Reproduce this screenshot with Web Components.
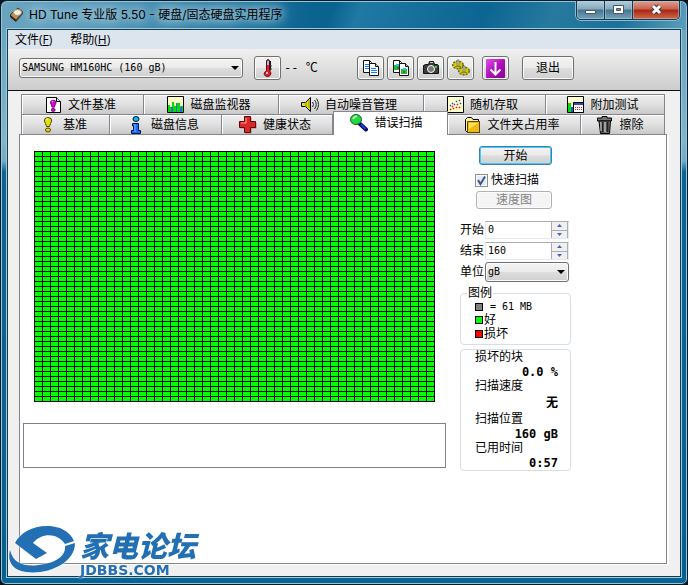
<!DOCTYPE html>
<html lang="zh-CN">
<head>
<meta charset="utf-8">
<title>HD Tune 专业版 5.50</title>
<style>
html,body{height:100%}
body{margin:0;background:#04141f;color:#000;
  --ui:"DejaVu Sans Mono","Noto Sans CJK SC",monospace;
  font:12px/16px "Open Sans","Noto Sans CJK SC",sans-serif}
</style>
</head>
<body>
<app-window>
  <title-bar slot="title">HD Tune 专业版 5.50 - 硬盘/固态硬盘实用程序</title-bar>
  <menu-bar slot="menu"></menu-bar>
  <tool-bar slot="tools"></tool-bar>
  <tab-row slot="tabs" columns="122fr 135fr 145fr 122fr 119fr">
    <tab-item icon="filebench">文件基准</tab-item>
    <tab-item icon="monitor">磁盘监视器</tab-item>
    <tab-item icon="speaker">自动噪音管理</tab-item>
    <tab-item icon="random">随机存取</tab-item>
    <tab-item icon="extra">附加测试</tab-item>
  </tab-row>
  <tab-row slot="tabs" columns="88fr 112fr 111fr 115fr 133fr 84fr">
    <tab-item icon="bench">基准</tab-item>
    <tab-item icon="info">磁盘信息</tab-item>
    <tab-item icon="health">健康状态</tab-item>
    <tab-item icon="scan" selected>错误扫描</tab-item>
    <tab-item icon="folder">文件夹占用率</tab-item>
    <tab-item icon="trash">擦除</tab-item>
  </tab-row>
  <scan-page></scan-page>
  <forum-logo slot="logo"></forum-logo>
</app-window>

<script>
const svg=(w,h,body)=>`<svg width="${w}" height="${h}" viewBox="0 0 ${w} ${h}" aria-hidden="true">${body}</svg>`;
const page='<path d="M1.500 1.500h10l4 4V16.500h-14z" fill="#fff" stroke="#000"/><path d="M11.500 1.500v4h4" fill="#ddd" stroke="#000"/>';
const bang=(c,d)=>`<path d="M5 2.500Q8 .5 11 2.500Q12.500 5 10.500 7.500L9.500 10.500H6.500L5.500 7.500Q3.500 5 5 2.500z" fill="${c}" stroke="${d}"/><path d="M6 3q1-1.500 2-.5l-1 2z" fill="#fff" opacity=".8"/><ellipse cx="8" cy="14" rx="2.500" ry="2" fill="${c}" stroke="${d}"/>`;
const docs=(inner)=>`<path d="M1.500 1.500h6l2 2v10h-8z" fill="#fff" stroke="#111"/><path d="M7.500 1.500v3h2" fill="none" stroke="#111"/><path d="M7.500 4.500h6l3 3v9h-9z" fill="#fff" stroke="#111"/><path d="M13.500 4.500v3h3" fill="#ccc" stroke="#111"/>${inner}`;
const gear=(x,y)=>`<g transform="translate(${x} ${y})"><ellipse rx="5" ry="3.500" fill="#d9d000" stroke="#6a6500" stroke-width="2" stroke-dasharray="2 1"/><ellipse rx="4.500" ry="3" fill="#d4cc08"/><path d="M-1-5h2v6h-2z" fill="#c9c9c9" stroke="#555" stroke-width=".6"/><path d="M-3 1.500h6" stroke="#8f8800"/></g>`;
const icons={
 filebench:svg(17,18,page+`<g transform="translate(2 3) scale(.78)">${bang('#e000e0','#500050')}</g>`),
 bench:svg(17,18,bang('#e8dc10','#4c4800')),
 monitor:svg(17,17,'<path d="M.5.5h16v16H.5z" fill="#ffffc8" stroke="#000"/><path d="M1 9h2v2h2V6h2v4h3V7h3v3h3v6H1z" fill="#00e000"/><path d="M4 11h2v5H4zM9 7h1v9H9zM13 11h2v5h-2z" fill="#4060e0"/>'),
 speaker:svg(18,17,'<path d="M.5 6.500h4L9.500 1.500v14l-5-5h-4z" fill="#e8e000" stroke="#000"/><path d="M5 6v5M8 4v8" stroke="#8c8600"/><path d="M11.500 6q2 2.500 0 5M13.500 4q3.500 4.500 0 9M15.500 2.500q4 6 0 12" fill="none" stroke="#222"/>'),
 random:svg(17,17,'<path d="M.5.5h16v16H.5z" fill="#ffffc8" stroke="#000"/><path d="M3 9h1v1H3zM5 7h1v1H5zM7 8h1v1H7zM9 5h1v1H9zM12 4h1v1h-1zM13 7h1v1h-1z" fill="#1840ff" stroke="#1840ff" stroke-width=".5"/><path d="M3 13h1v1H3zM6 12h1v1H6zM5 10h1v1H5zM9 11h1v1H9zM12 11h1v1h-1zM10 8h1v1h-1z" fill="#f00" stroke="#f00" stroke-width=".5"/>'),
 extra:svg(17,17,'<path d="M.5.5h16v16H.5z" fill="#ffffd0" stroke="#000"/><path d="M1 7h3v9H1z" fill="#00e000"/><path d="M4 11h3v5H4z" fill="#3050d0"/><path d="M6.500 6.500h10v10h-10z" fill="#fff" stroke="#000"/><path d="M7 7h9v2H7z" fill="#2848c8"/><path d="M8 11.500h8M8 13.500h8" stroke="#e02020" stroke-dasharray="1 1"/>'),
 info:svg(17,18,'<ellipse cx="8" cy="3" rx="3" ry="2.500" fill="#18b8e8" stroke="#001830"/><path d="M4.500 7.500h6v7h2v3H3.500v-3h2V10h-1z" fill="#1070ff" stroke="#001040"/><path d="M7 8v8" stroke="#70c0ff"/>'),
 health:svg(18,18,'<path d="M6.500 1.500h6v5h5v6h-5v5h-6v-5h-5v-6h5z" fill="#8b8b8b"/><path d="M5.500.5h6v5h5v6h-5v5h-6v-5h-5v-6h5z" fill="#d82828" stroke="#600"/><path d="M7 2v5H2" fill="none" stroke="#ff9a90"/>'),
 scan:svg(18,18,'<path d="M9 9l7 6.500" stroke="#000060" stroke-width="4" stroke-linecap="round"/><path d="M11 10.500l4.500 4.500" stroke="#2040e0" stroke-width="2"/><ellipse cx="6" cy="5.500" rx="5.500" ry="5" fill="#20d840" stroke="#106020"/><path d="M3 5q1-2.500 4-3" stroke="#baffba" stroke-width="2" fill="none"/>'),
 folder:svg(17,17,'<path d="M1.500 14.500v-11l2-2h4l1.500 2h5.500v2h1v11h-12z" fill="#fff090" stroke="#000"/><path d="M3.500 5.500h12v11h-12z" fill="#edbb14" stroke="#5a4200"/><path d="M5 7h9L5 13z" fill="#ffe060"/>'),
 trash:svg(16,18,'<path d="M5 2V.5h5V2h4.500v3H.5V2z" fill="#777" stroke="#000"/><path d="M2 5h11.500l-1 12.500h-9z" fill="#777" stroke="#000"/><path d="M5.500 6v10.500M10.500 6v10" stroke="#222" stroke-width="2"/><path d="M4 6v9M8 6v10" stroke="#ccc"/>'),
 disk:svg(15,15,'<path d="M1 8L9 1l5 4-7 8z" fill="#c98b4c" stroke="#54351b"/><ellipse cx="8.500" cy="5.500" rx="4" ry="3" fill="#fff3dc" stroke="#997" /><path d="M1 8l6 5v2L1 10z" fill="#222"/><path d="M7 13l7-8v2l-7 8z" fill="#444"/>'),
 thermo:svg(18,20,'<path d="M7.500 2.500q1.500-2 3 0v10q3 3 0 5.500q-2 1-4 0q-3-2.500 1-5.500z" fill="#e02030" stroke="#700010"/><path d="M8 3h2v4H8z" fill="#60e0e8"/><path d="M11.500 3v9.500" stroke="#111"/><path d="M11 8h2M11 11h2" stroke="#444"/><path d="M7 15h2" stroke="#ffb0b0" stroke-width="2"/>'),
 copy:svg(18,18,docs('<path d="M3 5.500h4M3 7.500h4M3 9.500h4M9 9.500h5M9 11.500h6M9 13.500h6" stroke="#1080ff"/>')),
 copyimg:svg(18,18,docs('<path d="M2 6h5v5H2zM9 10h6v5H9z" fill="#10c840"/><path d="M4 5h3v2H4zM11 9h3v2h-3z" fill="#10c8f0"/><path d="M5 8h2v2H5zM11 12h2v2h-2z" fill="#f02020"/>')),
 camera:svg(18,18,'<path d="M1.500 6.500l2-1h3l1-3h4l1 3h3l1 1v8h-15z" fill="#3b3b3b" stroke="#111"/><path d="M8 3.500h3" stroke="#ccc"/><circle cx="9" cy="10" r="3.500" fill="#777" stroke="#fff"/><path d="M13 7h2v2h-2z" fill="#10e040"/>'),
 gears:svg(18,18,gear(6,6)+gear(12,12)),
 down:svg(19,19,'<defs><linearGradient id="p" x2="1" y2="1"><stop stop-color="#e052e8"/><stop offset=".5" stop-color="#b010b8"/><stop offset="1" stop-color="#8b0099"/></linearGradient></defs><rect width="19" height="19" rx="1" fill="url(#p)"/><path d="M9.500 3v12M4.500 10.500l5 5 5-5" fill="none" stroke="#fff" stroke-width="2"/>')
};
const base=`:host{box-sizing:border-box}*{box-sizing:border-box}button,input,select,textarea{font:inherit;color:inherit;margin:0}svg{display:block;flex:none}
.push{border:1px solid #707070;border-radius:3px;background:linear-gradient(#f3f3f3,#ebebeb 48%,#ddd 52%,#cfcfcf);box-shadow:inset 0 0 0 1px #fbfbfb;padding:0}
.drop{appearance:none;border:1px solid #707070;border-radius:3px;height:20px;padding:0 18px 0 2px;min-width:0;
 background:linear-gradient(#f3f3f3,#ebebeb 48%,#ddd 52%,#cfcfcf);box-shadow:inset 0 0 0 1px #fbfbfb}
.combo{display:grid;grid-template-columns:minmax(0,1fr)}.combo>*{grid-area:1/1}.combo svg{place-self:center end;margin-right:4px;pointer-events:none}`;
const arrow=svg(8,4,'<path d="M0 0h8L4 4z"/>');
const define=(name,html,setup)=>customElements.define(name,class extends HTMLElement{
  constructor(){super();this.attachShadow({mode:'open'}).innerHTML=`<style>${base}</style>`+html(this);}
  connectedCallback(){if(setup)setup(this)}
});

define('title-bar',()=>`<style>
:host{display:flex;height:29px;padding:0 7px 0 8px;align-items:flex-start;font-family:Inter,"Noto Sans CJK SC",sans-serif}
.name{display:flex;align-items:center;gap:5px;height:27px;flex:1;min-width:0;white-space:nowrap;text-shadow:0 0 8px #c6e0ee,0 0 12px #a9cfe2,0 0 16px #a9cfe2}
.box{display:flex;border:1px solid #17384d;border-top:0;border-radius:0 0 5px 5px;overflow:hidden;box-shadow:0 0 0 1px #8fb9ce}
.box button{display:grid;place-items:center;border:0;border-right:1px solid #17384d;width:28px;height:18px;padding:0;background:linear-gradient(#b3cddc,#83a7bc 45%,#45748f 50%,#75a3ba);box-shadow:inset 0 0 0 1px #b5d0df80}
.box .close{width:46px;border:0;background:linear-gradient(#dca093,#c9604d 45%,#a82411 50%,#d06b4a)}
</style><div class="name">${icons.disk}<span><slot></slot></span></div>
<div class="box"><button aria-label="最小化">${svg(13,12,'<path d="M1.500 6.500h10v3h-10z" fill="#fff" stroke="#485965"/>')}</button>
<button aria-label="最大化">${svg(13,12,'<path d="M1.500 1.500h10v8h-10z" fill="#fff" stroke="#485965"/><path d="M4.500 4.500h4v2h-4z" fill="#6d96aa" stroke="#485965"/>')}</button>
<button class="close" aria-label="关闭">${svg(13,12,'<path d="M3 2l7 7M10 2l-7 7" stroke="#533" stroke-width="5"/><path d="M3 2l7 7M10 2l-7 7" stroke="#fff" stroke-width="3"/>')}</button></div>`);

define('menu-bar',()=>`<style>
:host{display:flex;gap:18px;height:19px;padding-left:7px;background:#dce4ed}
button{border:0;background:none;padding:0;line-height:19px}
</style><button>文件(<u>F</u>)</button><button>帮助(<u>H</u>)</button>`);

define('icon-button',el=>`<style>
:host{display:block}
button{display:grid;place-items:center;width:27px;height:24px;box-shadow:inset 0 0 0 1px #fbfbfb,0 0 0 1px #f0f0f0}
</style><button class="push" aria-label="${el.getAttribute('label')}">${icons[el.getAttribute('icon')]}</button>`);

define('tool-bar',()=>`<style>
:host{display:flex;align-items:center;height:42px;padding:0 11px 3px;background:linear-gradient(#f0f0f0,#ccc);border-bottom:1px solid #111;font-family:var(--ui)}
.combo{width:224px;margin-right:11px;font-size:10px}.temp{width:76px;padding-left:3px;font-size:12px;white-space:pre}
.group{display:flex;gap:3px;margin-right:8px}.exit{width:52px;height:24px;margin-left:13px}
</style><div class="combo"><select class="drop" aria-label="硬盘"><option>SAMSUNG HM160HC (160 gB)</option></select>${arrow}</div>
<icon-button icon="thermo" label="温度"></icon-button><span class="temp">-- ℃</span>
<div class="group"><icon-button icon="copy" label="复制文本"></icon-button><icon-button icon="copyimg" label="复制图像"></icon-button><icon-button icon="camera" label="截图"></icon-button><icon-button icon="gears" label="选项"></icon-button></div>
<icon-button icon="down" label="保存"></icon-button><button class="push exit">退出</button>`);

define('tab-item',el=>`<style>
:host{display:block;height:20px;min-width:0}
button{display:flex;align-items:center;justify-content:center;gap:6px;width:100%;height:100%;padding:0 4px 0 0;white-space:nowrap;border:0;border-top:1px solid #85858e;border-right:1px solid #85858e;background:linear-gradient(#ededed,#e2e2e2 45%,#c9c9c9);box-shadow:inset 1px 1px #fff}
:host([selected]){height:24px;margin:-3px 0 -1px;z-index:1}
:host([selected]) button{background:#fff;border-left:1px solid #85858e;padding:0 8px 2px 0}
</style><button role="tab" aria-selected="${el.hasAttribute('selected')}">${icons[el.getAttribute('icon')]}<span><slot></slot></span></button>`);

define('tab-row',()=>`<style>
:host{display:grid;height:20px;margin:0 2px;border-left:1px solid #85858e;font-family:var(--ui)}
</style><slot></slot>`,el=>el.style.gridTemplateColumns=el.getAttribute('columns'));

define('block-map',()=>`<style>
:host{display:block;width:401px;height:251px;background-color:#0f0;
background-image:repeating-linear-gradient(90deg,#000 0 1px,transparent 1px 8px),repeating-linear-gradient(#000 0 1px,transparent 1px 5px)}
</style>`);

define('number-field',el=>`<style>
:host{display:grid;grid-template-columns:25px minmax(0,1fr);align-items:center;height:19px}
.field{display:flex;height:18px;border:1px solid #e3e9ef;border-top-color:#abadb3;background:#fff}
input{flex:1;min-width:0;border:0;padding:0 2px;background:none;font-size:10px;outline:0}
.spin{display:grid;width:17px;border:1px solid #abadb3;border-top:0}
.spin button{display:grid;place-items:center;border:0;padding:0;background:#f0f0f0;height:8px;overflow:hidden}
.spin button+button{border-top:1px solid #abadb3}
</style><label for="n">${el.getAttribute('label')}</label><div class="field"><input id="n" type="text" inputmode="numeric" value="${el.getAttribute('value')}">
<span class="spin"><button aria-label="增加">${svg(5,3,'<path d="M0 3h5L2.500 0z" fill="#4a62b8"/>')}</button><button aria-label="减少">${svg(5,3,'<path d="M0 0h5L2.500 3z" fill="#4a62b8"/>')}</button></span></div>`);

define('legend-box',()=>`<style>
:host{display:block}
fieldset{margin:0;border:1px solid #d5dfe5;border-radius:4px;padding:0 0 3px 14px;min-width:0;line-height:14px}
legend{padding:0 1px;margin-left:-8px;line-height:16px}
p{margin:0;display:flex;align-items:center;gap:1px}i{width:8px;height:8px;border:1px solid #000;background:var(--c)}
.size{font-size:10px;gap:7px;line-height:12px}
</style><fieldset><legend>图例</legend><p class="size"><i style="--c:#808080"></i>= 61 MB</p><p><i style="--c:#0f0"></i>好</p><p><i style="--c:#f00"></i>损坏</p></fieldset>`);

define('stat-box',()=>`<style>
:host{display:block;border:1px solid #d5dfe5;border-radius:4px;padding:0 12px 0 14px}
dl{margin:0}dt{line-height:15px}dd{margin:0;text-align:right;font-weight:bold;line-height:14px;white-space:pre}
dd.tall{line-height:18px}
</style><dl><dt>损坏的块</dt><dd>0.0 %</dd><dt>扫描速度</dt><dd class="tall">无</dd><dt>扫描位置</dt><dd>160 gB</dd><dt>已用时间</dt><dd>0:57</dd></dl>`);

define('scan-page',()=>`<style>
:host{display:grid;grid-template-columns:minmax(423px,1fr) 111px;column-gap:14px;align-items:start;flex:1;padding:11px 95px 0 3px;border:1px solid #85858e;background:#fff;box-shadow:2px 1px #fff;font-family:var(--ui)}
.left{display:grid;gap:21px;padding-top:5px}block-map{margin-left:11px}
textarea{width:100%;height:45px;border:1px solid #808088;resize:none;outline:0;display:block}
.right{display:flex;flex-direction:column}
.start{height:19px;margin:0 19px;border-color:#3c7fb1;box-shadow:inset 0 0 0 1px #48c8f4}
.quick{display:flex;align-items:center;gap:3px;height:16px;margin:7px 0 3px 15px}
.quick input{appearance:none;width:13px;height:13px;border:1px solid #8e8f8f;background:#e6ebf2;box-shadow:inset 0 0 0 1px #fff}
.check{display:grid}.check>*{grid-area:1/1}.check svg{pointer-events:none}
.speed{height:18px;margin:0 19px 11px 16px;border-color:#adb2b5;background:#f4f4f4;color:#838383;line-height:16px}
.form{display:grid;grid-template-columns:minmax(0,1fr);gap:2px;padding-right:2px}
.unit{display:grid;grid-template-columns:25px minmax(0,1fr);align-items:center}.unit select{font-size:10px;width:100%}
legend-box{margin:3px 0 4px}
</style><div class="left"><block-map role="img" aria-label="扫描块"></block-map><textarea readonly aria-label="日志"></textarea></div>
<div class="right"><button class="push start">开始</button>
<div class="quick"><span class="check"><input type="checkbox" id="q" checked>${svg(13,13,'<path d="M3 6l2.500 4L10 2.500" fill="none" stroke="#41578f" stroke-width="2"/>')}</span><label for="q">快速扫描</label></div>
<button class="push speed" disabled>速度图</button>
<div class="form"><number-field label="开始" value="0"></number-field><number-field label="结束" value="160"></number-field>
<div class="unit"><label for="u">单位</label><span class="combo"><select id="u" class="drop"><option>gB</option></select>${arrow}</span></div></div>
<legend-box></legend-box><stat-box></stat-box></div>`);

define('forum-logo',()=>`<style>
:host{display:flex;align-items:flex-start;gap:5px;color:#236fb4;font-family:"Noto Sans CJK SC",sans-serif;pointer-events:none;filter:drop-shadow(0 0 1px #fff)}
b{display:block}.cn{font-size:29px;line-height:38px;font-weight:900;font-style:italic}
.en{font:bold 14px/14px "DejaVu Sans",sans-serif}
</style>${svg(66,50,'<path d="M6 18C12 5 32-3 51 3Q62 8 65 16L56 19C49 8 33 7 24 18L38 28 27 34z" fill="#236fb4"/><path d="M66 18C66 38 39 50 17 47C3 45-2 36 1 25C5 42 21 42 36 39C51 36 57 28 56 21z" fill="#236fb4"/>')}
<div><b class="cn">家电论坛</b><b class="en">JDBBS.COM</b></div>`);

define('app-window',()=>`<style>
:host{display:flex;flex-direction:column;min-height:100vh;position:relative;padding-bottom:8px;border-radius:7px 7px 6px 6px;
border:1px solid #061c29;box-shadow:inset 0 0 0 1px #8fc6dd;
background:linear-gradient(90deg,#6aa4bf 0,#065f8c00 45%),linear-gradient(110deg,#4790b0 0,#136a96 30%,#0a628f 48%,#2079a3 52%,#0c6592 70%,#277a9e 80%,#1a7199 90%,#5e9fbb 100%);background-size:100% 29px;background-repeat:no-repeat;background-color:#0a6390;overflow:hidden}
.frame{display:flex;flex:1;margin:0 1px;padding:0 6px;background:linear-gradient(#6aa6c0,#82b4ca 20%,#76abc3 24%,#0b6491 26%,#07608e)}
.client{display:flex;flex-direction:column;flex:1;min-width:0;background:#f0f0f0;box-shadow:0 0 0 1px #12394d,0 0 0 2px #9ccbdd}
.pages{display:flex;flex:1;flex-direction:column;padding:3px 13px 12px 11px}
.logo{position:absolute;left:8px;bottom:7px}
</style><slot name="title"></slot><div class="frame"><div class="client"><slot name="menu"></slot><slot name="tools"></slot><div class="pages"><slot name="tabs"></slot><slot></slot></div></div></div><div class="logo"><slot name="logo"></slot></div>`);
</script>
</body>
</html>
